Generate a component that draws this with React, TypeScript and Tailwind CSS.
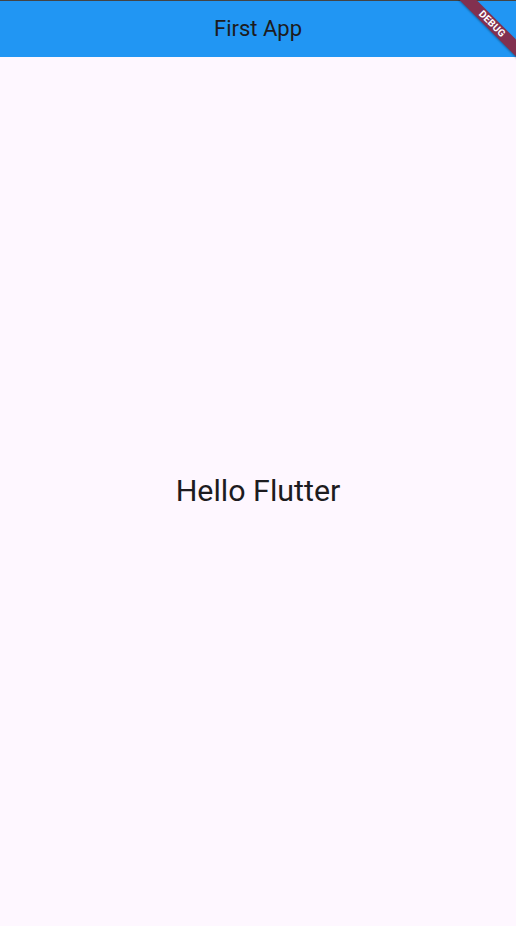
import React from "react";

export default function App() {
  return (
    <div
      className="relative w-[516px] h-[926px] overflow-hidden bg-[#FEF7FF] flex flex-col"
      style={{ fontFamily: "Roboto, 'Noto Sans', sans-serif" }}
    >
      <div className="h-px bg-[#444444] shrink-0" />
      <header className="h-[56px] shrink-0 bg-[#2196F3] flex items-center justify-center">
        <span className="text-[22px] text-[#1D1B20] leading-none">First App</span>
      </header>
      <main className="flex-1 flex items-center justify-center">
        <span className="text-[30.4px] text-[#1D1B20] leading-none">Hello Flutter</span>
      </main>
      <div className="absolute left-[432px] top-[18px] w-[120px] h-[12px] rotate-45 bg-[#82304F] flex items-center justify-center shadow-[0_1px_2px_rgba(0,0,0,0.3)]">
        <span className="text-[10px] font-bold text-white leading-none tracking-[0.2px]">DEBUG</span>
      </div>
    </div>
  );
}
